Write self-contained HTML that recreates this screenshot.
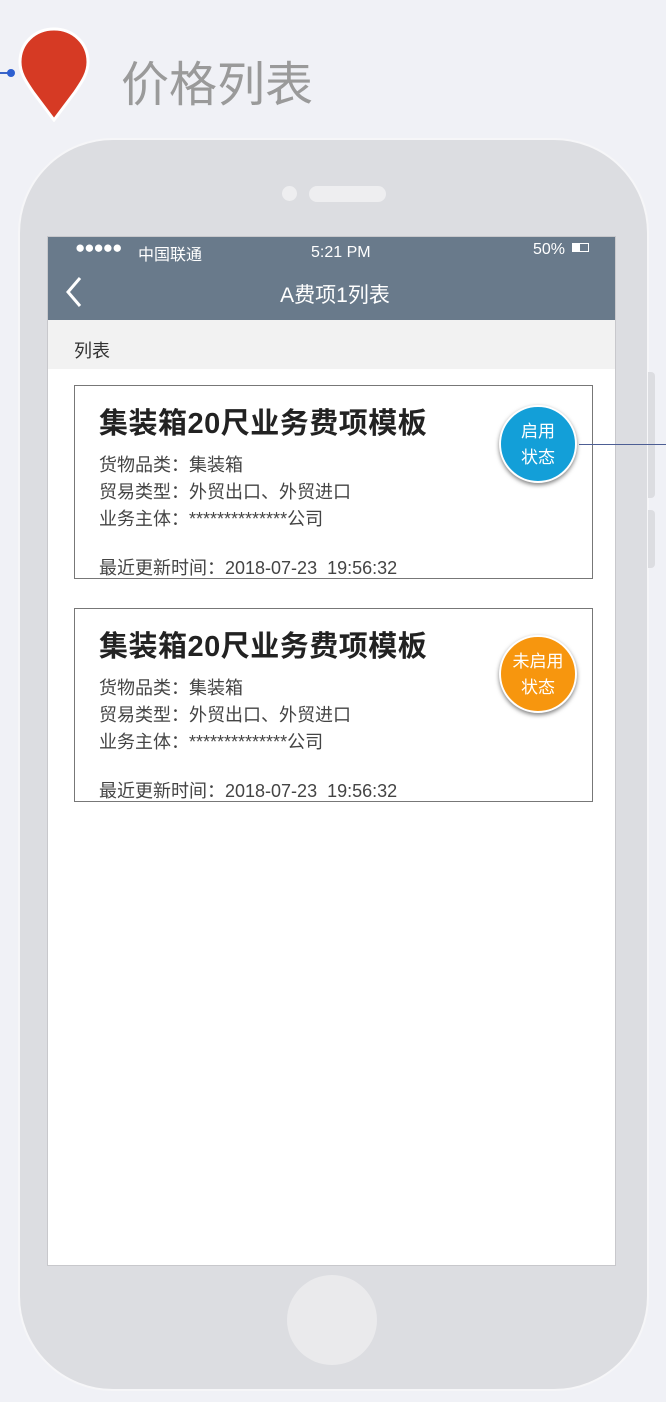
<!DOCTYPE html>
<html><head><meta charset="utf-8"><style>
*{margin:0;padding:0;box-sizing:border-box}
body{width:666px;height:1402px;background:#f0f1f6;position:relative;overflow:hidden;font-family:"Liberation Sans","Noto Sans CJK SC",sans-serif}
.abs{position:absolute}
.phone{left:18px;top:138px;width:631px;height:1253px;background:#dcdde1;border-radius:95px;border:2px solid #f6f6f8}
.screen{left:47px;top:236px;width:569px;height:1030px;background:#fff;border:1px solid #c8c8cc}
.card{left:74px;width:519px;height:194px;border:1px solid #777;background:#fff}
.card h2{position:absolute;left:24px;top:14px;font-size:29px;font-weight:bold;color:#222;letter-spacing:0.5px;white-space:nowrap}
.card p{position:absolute;left:24px;font-size:18px;color:#444;white-space:nowrap}
.badge{position:absolute;width:78px;height:78px;border-radius:50%;border:2px solid #fff;box-shadow:0 2px 4px rgba(0,0,0,.5);color:#fff;font-size:17px;line-height:26px;text-align:center;padding-top:12px}
</style></head><body>
<div class="abs" style="left:0;top:72px;width:12px;height:2px;background:#3a64c8"></div>
<div class="abs" style="left:7px;top:69px;width:8px;height:8px;border-radius:50%;background:#2d5fd0"></div>
<svg class="abs" style="left:16px;top:26px" width="76" height="96" viewBox="0 0 76 96"><path d="M38 3C19 3 4 17 4 36c0 12 7 21 13 30l21 28 21-28c6-9 13-18 13-30C72 17 57 3 38 3z" fill="#d63a24" stroke="#fff" stroke-width="3"/></svg>
<div class="abs" style="left:121px;top:51px;font-size:48px;color:#9a9a9a;font-family:'Noto Sans CJK SC',sans-serif;line-height:58px">价格列表</div>
<div class="abs phone"></div>
<div class="abs" style="left:648px;top:372px;width:7px;height:126px;background:#dcdde1;border-radius:0 4px 4px 0"></div>
<div class="abs" style="left:648px;top:510px;width:7px;height:58px;background:#dcdde1;border-radius:0 4px 4px 0"></div>
<div class="abs" style="left:282px;top:186px;width:15px;height:15px;border-radius:50%;background:#eeeef0"></div>
<div class="abs" style="left:309px;top:186px;width:77px;height:16px;border-radius:8px;background:#eeeef0"></div>
<div class="abs" style="left:287px;top:1275px;width:90px;height:90px;border-radius:50%;background:#eaeaec"></div>
<div class="abs screen"></div>
<div class="abs" style="left:48px;top:237px;width:567px;height:83px;background:#697a8b"></div>
<div class="abs" style="left:75px;top:238px;color:#fff;font-size:17px;letter-spacing:-1px">●●●●●</div>
<div class="abs" style="left:138px;top:241px;color:#fff;font-size:16px">中国联通</div>
<div class="abs" style="left:311px;top:244px;color:#fff;font-size:16px">5:21 PM</div>
<div class="abs" style="left:533px;top:241px;color:#fff;font-size:16px">50%</div>
<div class="abs" style="left:572px;top:243px;width:17px;height:9px;border:1px solid #fff"><div style="width:7px;height:7px;background:#fff"></div></div>
<svg class="abs" style="left:64px;top:276px" width="20" height="32"><path d="M16 2L4 16l12 14" fill="none" stroke="#fff" stroke-width="3"/></svg>
<div class="abs" style="left:0;width:666px;text-align:center;top:279px;color:#fff;font-size:21px;padding-left:4px">A费项1列表</div>
<div class="abs" style="left:48px;top:320px;width:567px;height:49px;background:#f2f2f2"></div>
<div class="abs" style="left:74px;top:337px;font-size:18px;color:#333">列表</div>
<div class="abs card" style="top:385px">
<h2>集装箱20尺业务费项模板</h2>
<p style="top:65px">货物品类：集装箱</p><p style="top:92px">贸易类型：外贸出口、外贸进口</p><p style="top:119px">业务主体：**************公司</p><p style="top:168px">最近更新时间：2018-07-23&nbsp;&nbsp;19:56:32</p>
<div class="badge" style="left:424px;top:19px;background:#139fd8">启用<br>状态</div>
</div>
<div class="abs" style="left:579px;top:444px;width:87px;height:1px;background:#4d5e94"></div>
<div class="abs card" style="top:608px">
<h2>集装箱20尺业务费项模板</h2>
<p style="top:65px">货物品类：集装箱</p><p style="top:92px">贸易类型：外贸出口、外贸进口</p><p style="top:119px">业务主体：**************公司</p><p style="top:168px">最近更新时间：2018-07-23&nbsp;&nbsp;19:56:32</p>
<div class="badge" style="left:424px;top:26px;background:#f7960e">未启用<br>状态</div>
</div>
</body></html>
